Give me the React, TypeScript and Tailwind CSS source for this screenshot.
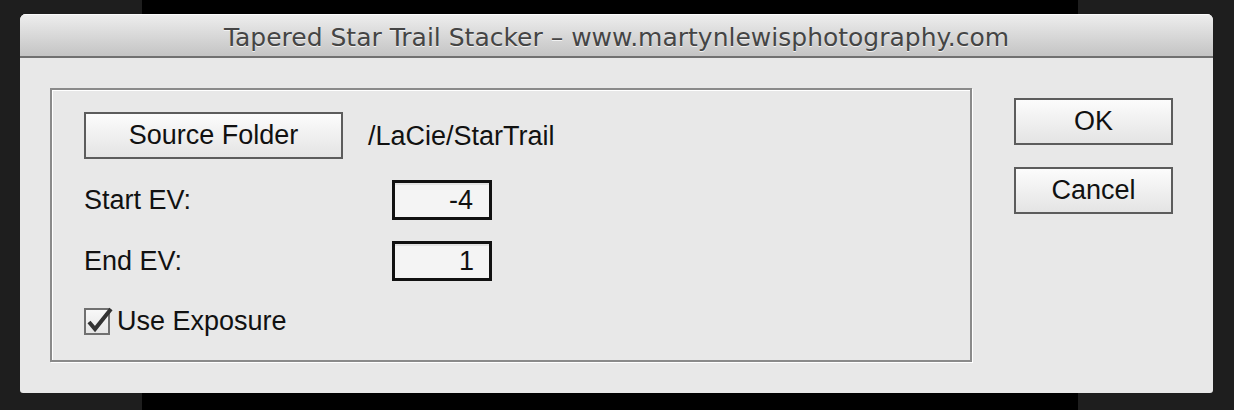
export default function App() {
  return (
    <div className="w-[1234px] h-[410px] overflow-hidden pt-[14px] pl-[20px] bg-[linear-gradient(to_right,#1e1e1e_142px,#000_142px,#000_1078px,#1e1e1e_1078px)]">
      <div className="w-[1193px] h-[379px] rounded-t-[6px] rounded-b-[3px] overflow-hidden bg-[#e8e8e8] flex flex-col font-['Liberation_Sans',Arial,sans-serif] text-[27px] text-[#111]">
        {/* title bar */}
        <div className="h-[44px] shrink-0 border-b-2 border-[#707070] bg-gradient-to-b from-[#eeeeee] to-[#c4c4c4] shadow-[inset_0_1px_0_#fafafa] flex items-center justify-center">
          <span className="font-['DejaVu_Sans',sans-serif] text-[25px] leading-none text-[#454545] [text-shadow:0_1px_0_#f2f2f2] pt-[4px]">
            Tapered Star Trail Stacker – www.martynlewisphotography.com
          </span>
        </div>

        <div className="flex pl-[30px] pt-[30px]">
          {/* group panel */}
          <div className="w-[922px] h-[274px] shrink-0 border-2 border-[#8a8a8a] shadow-[inset_1px_1px_0_#fff,1px_1px_0_#fff] pl-[32px] pt-[22px] flex flex-col">
            <div className="flex items-center">
              <button className="w-[259px] h-[47px] border-2 border-[#5c5c5c] bg-gradient-to-b from-[#fcfcfc] to-[#e4e4e4] flex items-center justify-center">
                Source Folder
              </button>
              <span className="ml-[25px] pt-[2px]">/LaCie/StarTrail</span>
            </div>

            <div className="flex items-center mt-[21px]">
              <span className="w-[308px]">Start EV:</span>
              <div className="w-[100px] h-[40px] border-[3px] border-[#111] bg-[#f4f4f4] shadow-[inset_0_2px_0_#e2e2e2] flex items-center justify-end pr-[16px]">
                -4
              </div>
            </div>

            <div className="flex items-center mt-[20px]">
              <span className="w-[308px]">End EV:</span>
              <div className="w-[100px] h-[40px] border-[3px] border-[#111] bg-[#f4f4f4] shadow-[inset_0_2px_0_#e2e2e2] flex items-center justify-end pr-[15px]">
                1
              </div>
            </div>

            <div className="flex items-center mt-[20px]">
              <div className="relative w-[26px] h-[27px] border-2 border-[#707070] bg-gradient-to-b from-[#f8f8f8] to-[#e6e6e6]">
                <svg className="absolute -left-[2px] -top-[4px]" width="30" height="30" viewBox="0 0 30 30">
                  <path d="M5 16 L11 23 L27 3" fill="none" stroke="#333" strokeWidth="4" strokeLinejoin="miter" />
                </svg>
              </div>
              <span className="ml-[7px]">Use Exposure</span>
            </div>
          </div>

          {/* right buttons */}
          <div className="ml-[42px] mt-[10px] flex flex-col gap-[22px]">
            <button className="w-[159px] h-[47px] border-2 border-[#5c5c5c] bg-gradient-to-b from-[#fcfcfc] to-[#e4e4e4] flex items-center justify-center">
              OK
            </button>
            <button className="w-[159px] h-[47px] border-2 border-[#5c5c5c] bg-gradient-to-b from-[#fcfcfc] to-[#e4e4e4] flex items-center justify-center">
              Cancel
            </button>
          </div>
        </div>
      </div>
    </div>
  );
}
